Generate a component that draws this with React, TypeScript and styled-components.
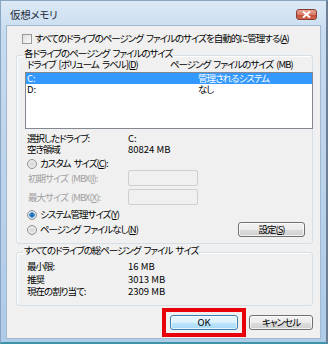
import { Fragment } from "react";
import styled, { createGlobalStyle } from "styled-components";

const GlobalStyle = createGlobalStyle`
  html, body {
    margin: 0;
    padding: 0;
    background: #ffffff;
  }
  body {
    font-family: "Noto Sans CJK JP", "Liberation Sans", sans-serif;
    font-size: 9.5px;
    font-feature-settings: "palt";
    letter-spacing: -1px;
    word-spacing: 2px;
    white-space: nowrap;
    color: #000;
  }
`;

const drives = [
  { id: "C:", size: "管理されるシステム", selected: true },
  { id: "D:", size: "なし", selected: false },
];

const totals = [
  { label: "最小限:", value: "16 MB" },
  { label: "推奨", value: "3013 MB" },
  { label: "現在の割り当て:", value: "2309 MB" },
];

const App = () => {
  return (
    <>
      <GlobalStyle />
      <Window>
        <TitleBar>
          <Title>仮想メモリ</Title>
          <CloseBtn>
            <svg width="9" height="7" viewBox="0 0 9 7">
              <path d="M1 0.5 L8 6.5 M8 0.5 L1 6.5" stroke="#fff" strokeWidth="2" />
            </svg>
          </CloseBtn>
        </TitleBar>

        <Content>
          <CheckRow>
            <CheckBox />
            <span>すべてのドライブのページング ファイルのサイズを自動的に管理する(<u>A</u>)</span>
          </CheckRow>

          <Group $top={11} $height={187}>
            <Legend>各ドライブのページング ファイルのサイズ</Legend>
            <HeaderRow>
              <span>ドライブ [ボリューム ラベル](<u>D</u>)</span>
              <span>ページング ファイルのサイズ (MB)</span>
            </HeaderRow>
            <ListBox>
              {drives.map((d) => (
                <ListRow key={d.id} $selected={d.selected}>
                  <Value>{d.id}</Value>
                  <span>{d.size}</span>
                </ListRow>
              ))}
            </ListBox>

            <InfoGrid>
              <span>選択したドライブ:</span>
              <Value>C:</Value>
              <span>空き領域</span>
              <Value>80824 MB</Value>
            </InfoGrid>

            <RadioRow $top={3}>
              <Radio />
              <span>カスタム サイズ(<u>C</u>):</span>
            </RadioRow>
            <FieldRow $top={1}>
              <span>初期サイズ (MBX(<u>I</u>):</span>
              <TextBox />
            </FieldRow>
            <FieldRow $top={3}>
              <span>最大サイズ (MBX(<u>X</u>):</span>
              <TextBox />
            </FieldRow>
            <RadioRow $top={4}>
              <Radio $checked />
              <span>システム管理サイズ(<u>Y</u>)</span>
            </RadioRow>
            <LastRow>
              <RadioRow $top={0}>
                <Radio />
                <span>ページング ファイルなし(<u>N</u>)</span>
              </RadioRow>
              <Button $width={67}>設定(<u>S</u>)</Button>
            </LastRow>
          </Group>

          <Group $top={8} $height={52}>
            <Legend>すべてのドライブの総ページング ファイル サイズ</Legend>
            <TotalGrid>
              {totals.map((t) => (
                <Fragment key={t.label}>
                  <span>{t.label}</span>
                  <Value>{t.value}</Value>
                </Fragment>
              ))}
            </TotalGrid>
          </Group>

          <ButtonBar>
            <Highlight>
              <Button $width={68} $default>
                <Value>OK</Value>
              </Button>
            </Highlight>
            <Button $width={64}>キャンセル</Button>
          </ButtonBar>
        </Content>
      </Window>
    </>
  );
};

export default App;

const Window = styled.div`
  width: 328px;
  height: 344px;
  box-sizing: border-box;
  display: flex;
  flex-direction: column;
  padding: 0 5px 3px 5px;
  background: linear-gradient(180deg, #dce9f6 0%, #c6dbef 10%, #b9d1ea 60%, #aecbe8 100%);
  border: 1px solid #8aa5c4;
  border-right: 2px solid #6d7f94;
  border-bottom: 2px solid #3f93a8;
`;

const TitleBar = styled.div`
  height: 24px;
  display: flex;
  align-items: center;
  justify-content: space-between;
  padding: 2px 4px 0 4px;
  box-sizing: border-box;
`;

const Title = styled.div`
  font-size: 10.5px;
  letter-spacing: -0.3px;
  color: #1b2a3a;
`;

const CloseBtn = styled.div`
  width: 21px;
  height: 11px;
  margin-top: 1px;
  box-sizing: border-box;
  border: 1px solid #8a3a30;
  border-radius: 3px;
  background: linear-gradient(180deg, #e9a596 0%, #d77a68 50%, #c24a34 51%, #d06a52 100%);
  display: flex;
  align-items: center;
  justify-content: center;
`;

const Content = styled.div`
  flex: 1;
  background: #f0f0f0;
  border: 1px solid #a3b9d2;
  padding: 7px 7px 0 0;
  display: flex;
  flex-direction: column;
`;

const Value = styled.span`
  letter-spacing: 0;
  word-spacing: 0;
`;

const CheckRow = styled.label`
  display: flex;
  align-items: center;
  gap: 3px;
  margin-left: 15px;
  height: 11px;
  line-height: 11px;
`;

const CheckBox = styled.span`
  width: 10px;
  height: 10px;
  box-sizing: border-box;
  border: 1px solid #9a9a9a;
  background: linear-gradient(135deg, #dedede, #fafafa);
  flex: none;
`;

const Group = styled.div<{ $top: number; $height: number }>`
  position: relative;
  margin: ${(p) => p.$top}px 0 0 9px;
  height: ${(p) => p.$height}px;
  border: 1px solid #d5dfe5;
  border-radius: 3px;
  box-shadow: inset 1px 1px 0 #ffffff;
`;

const Legend = styled.div`
  position: absolute;
  top: -8px;
  left: 6px;
  padding: 0 1px;
  line-height: 11px;
  background: #f0f0f0;
`;

const HeaderRow = styled.div`
  display: grid;
  grid-template-columns: 143px auto;
  padding: 3px 0 0 10px;
  height: 11px;
  line-height: 11px;
`;

const ListBox = styled.div`
  margin: 2px -1px 0 8px;
  height: 57px;
  box-sizing: border-box;
  border: 1px solid #828790;
  background: #ffffff;
`;

const ListRow = styled.div<{ $selected: boolean }>`
  display: grid;
  grid-template-columns: 171px auto;
  height: 11px;
  line-height: 11px;
  padding-left: 1px;
  background: ${(p) => (p.$selected ? "#3399ff" : "transparent")};
  color: ${(p) => (p.$selected ? "#ffffff" : "#000000")};
`;

const InfoGrid = styled.div`
  display: grid;
  grid-template-columns: 101px auto;
  grid-auto-rows: 11px;
  line-height: 11px;
  margin: 4px 0 0 10px;
`;

const RadioRow = styled.div<{ $top: number }>`
  display: flex;
  align-items: center;
  gap: 3px;
  height: 11px;
  line-height: 11px;
  margin: ${(p) => p.$top}px 0 0 10px;
`;

const Radio = styled.span<{ $checked?: boolean }>`
  width: 10px;
  height: 10px;
  box-sizing: border-box;
  border-radius: 50%;
  border: 1px solid #8e8f8f;
  flex: none;
  background: ${(p) =>
    p.$checked
      ? "radial-gradient(circle, #1d5b9a 0, #3d8fd6 2.5px, #d9e4ee 3px, #f4f4f4 5px)"
      : "radial-gradient(circle, #d3d3d3 0, #f4f4f4 5px)"};
`;

const FieldRow = styled.div<{ $top: number }>`
  display: grid;
  grid-template-columns: 100px 70px;
  align-items: center;
  margin: ${(p) => p.$top}px 0 0 11px;
  color: #a0a0a0;
  line-height: 11px;
`;

const TextBox = styled.div`
  height: 16px;
  box-sizing: border-box;
  border: 1px solid #cfcfcf;
  border-radius: 2px;
  background: #f0f0f0;
`;

const LastRow = styled.div`
  display: flex;
  align-items: center;
  justify-content: space-between;
  margin: 2px 7px 0 0;
  height: 15px;
`;

const Button = styled.div<{ $width: number; $default?: boolean }>`
  width: ${(p) => p.$width}px;
  height: 15px;
  box-sizing: border-box;
  display: flex;
  align-items: center;
  justify-content: center;
  line-height: 11px;
  border-radius: 3px;
  border: 1px solid ${(p) => (p.$default ? "#3c7fb1" : "#707070")};
  background: ${(p) =>
    p.$default
      ? "linear-gradient(180deg, #eaf6fd 0%, #d9f0fc 50%, #bee6fd 51%, #a7d9f5 100%)"
      : "linear-gradient(180deg, #f2f2f2 0%, #ebebeb 50%, #dddddd 51%, #cfcfcf 100%)"};
  box-shadow: inset 0 0 0 1px rgba(255, 255, 255, 0.7);
`;

const TotalGrid = styled.div`
  display: grid;
  grid-template-columns: 101px auto;
  grid-auto-rows: 12.5px;
  line-height: 12.5px;
  margin: 7px 0 0 10px;
`;

const ButtonBar = styled.div`
  display: flex;
  align-items: center;
  justify-content: flex-end;
  margin-top: 2px;
  gap: 3px;
`;

const Highlight = styled.div`
  border: 4px solid #e8000b;
  padding: 3px 4px;
`;
